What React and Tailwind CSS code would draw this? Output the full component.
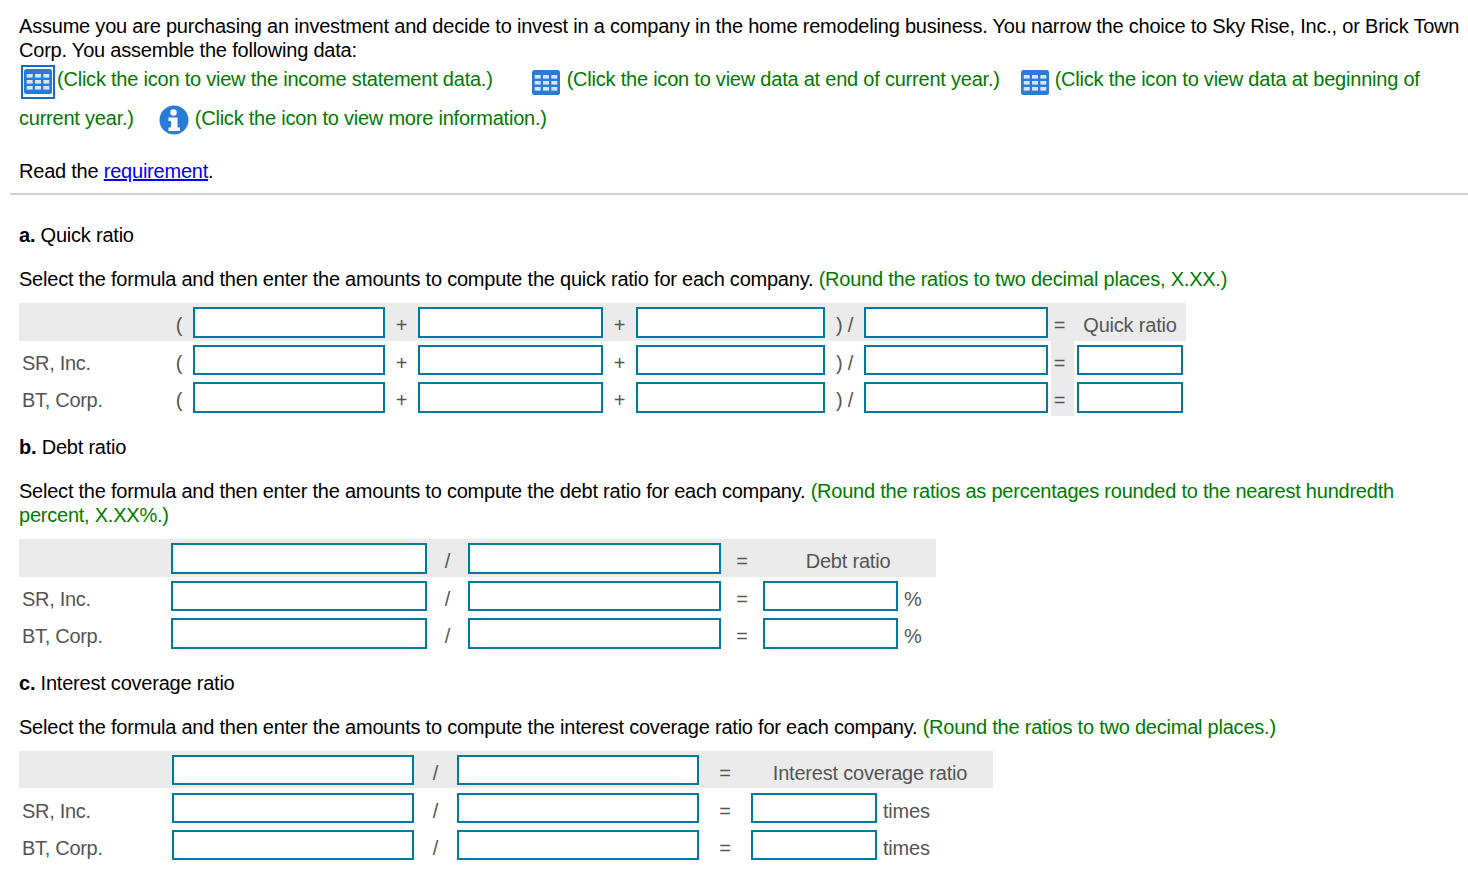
const green = "text-[#007a00]";

function Grid({ focus }) {
  return (
    <span className={`inline-flex items-center justify-center align-middle ${focus ? "border-[2px] border-[#0a6fc9] w-[34px] h-[34px]" : "w-[29px] h-[25px] mt-[1px]"}`}>
      <svg width="28" height="25" viewBox="0 0 28 25">
        <rect x="0" y="0" width="28" height="25" rx="2.5" fill="#2a7bd6" />
        {[5, 11, 17].map((y) =>
          [2.7, 11, 19.3].map((x) => (
            <rect key={`${x}-${y}`} x={x} y={y} width="6" height="3.6" fill="#d6e6f7" />
          ))
        )}
      </svg>
    </span>
  );
}

function Info() {
  return (
    <svg width="30" height="30" viewBox="0 0 30 30" className="inline-block align-middle">
      <circle cx="15" cy="15" r="14.5" fill="#2a7bd6" />
      <circle cx="14.5" cy="7.5" r="3.2" fill="#fff" />
      <path d="M9.5 12.5h9v10h2.5v3.5H9.5v-3.5h2.5v-6.5H9.5z" fill="#fff" />
    </svg>
  );
}

function Box({ w, h = "h-[31px]" }) {
  return <div className={`${w} ${h} shrink-0 border-2 border-[#00799e] bg-white`} />;
}

function Sym({ w, children, cls = "" }) {
  return <div className={`${w} shrink-0 pt-[5px] text-center text-[#555] text-[20px] leading-[24px] ${cls}`}>{children}</div>;
}

function Label({ w, children }) {
  return <div className={`${w} shrink-0 pt-[5px] pl-[3px] text-[#555] text-[20px] tracking-[-0.3px]`}>{children}</div>;
}

function RowA({ label, head, h, boxH }) {
  return (
    <div className={`flex items-center ${h} w-[1167px] ${head ? "bg-[#ebebeb]" : ""}`}>
      <Label w="w-[154px]">{label}</Label>
      <Sym w="w-[12px]" cls="mr-[8px]">(</Sym>
      <Box w="w-[192px]" h={boxH} />
      <Sym w="w-[33px]">+</Sym>
      <Box w="w-[185px]" h={boxH} />
      <Sym w="w-[33px]">+</Sym>
      <Box w="w-[189px]" h={boxH} />
      <Sym w="w-[39px]">{") /"}</Sym>
      <Box w="w-[184px]" h={boxH} />
      <div className={`w-[23px] ml-[3px] pr-[6px] pt-[5px] shrink-0 self-stretch flex items-center justify-center text-[#555] text-[20px] ${head ? "" : "bg-[#ebebeb]"}`}>=</div>
      {head ? (
        <div className="w-[112px] pt-[5px] shrink-0 text-center text-[#555] text-[20px] tracking-[-0.2px]">Quick ratio</div>
      ) : (
        <Box w="w-[106px] ml-[3px]" h={boxH} />
      )}
    </div>
  );
}

function RowB({ label, head, h, boxH }) {
  return (
    <div className={`flex items-center ${h} w-[917px] ${head ? "bg-[#ebebeb]" : ""}`}>
      <Label w="w-[152px]">{label}</Label>
      <Box w="w-[256px]" h={boxH} />
      <Sym w="w-[41px]">/</Sym>
      <Box w="w-[253px]" h={boxH} />
      <Sym w="w-[42px]">=</Sym>
      {head ? (
        <div className="w-[170px] pt-[5px] shrink-0 text-center text-[#555] text-[20px] tracking-[-0.2px]">Debt ratio</div>
      ) : (
        <>
          <Box w="w-[135px]" h={boxH} />
          <div className="ml-[6px] pt-[5px] text-[#555] text-[20px]">%</div>
        </>
      )}
    </div>
  );
}

function RowC({ label, head, h, boxH }) {
  return (
    <div className={`flex items-center ${h} w-[974px] ${head ? "bg-[#ebebeb]" : ""}`}>
      <Label w="w-[153px]">{label}</Label>
      <Box w="w-[242px]" h={boxH} />
      <Sym w="w-[43px]">/</Sym>
      <Box w="w-[242px]" h={boxH} />
      <Sym w="w-[52px]">=</Sym>
      {head ? (
        <div className="w-[238px] pt-[5px] shrink-0 text-center text-[#555] text-[20px] tracking-[-0.2px]">Interest coverage ratio</div>
      ) : (
        <>
          <Box w="w-[126px]" h={boxH} />
          <div className="ml-[6px] pt-[5px] text-[#555] text-[20px] tracking-[-0.2px]">times</div>
        </>
      )}
    </div>
  );
}

export default function App() {
  return (
    <div className="w-[1468px] h-[874px] overflow-hidden bg-white text-black text-[20px] leading-[24px] tracking-[-0.22px] pt-[14px]" style={{ fontFamily: '"Liberation Sans", Arial, sans-serif' }}>
      <div className="pl-[19px]">
        <p className="tracking-[-0.208px]">Assume you are purchasing an investment and decide to invest in a company in the home remodeling business. You narrow the choice to Sky Rise, Inc., or Brick Town Corp. You assemble the following data:</p>
        <div className={`${green} h-[39px] flex items-center whitespace-nowrap`}>
          <span className="ml-[2px] mr-[2px] flex"><Grid focus /></span>
          <span className="mb-[5px]">(Click the icon to view the income statement data.)</span>
          <span className="ml-[39px] mr-[6px] flex"><Grid /></span>
          <span className="mb-[5px]">(Click the icon to view data at end of current year.)</span>
          <span className="ml-[21px] mr-[5px] flex"><Grid /></span>
          <span className="mb-[5px]">(Click the icon to view data at beginning of</span>
        </div>
        <div className={`${green} h-[39px] flex items-center whitespace-nowrap`}>
          <span className="mb-[5px]">current year.)</span>
          <span className="ml-[25px] mr-[6px] mb-[1px] flex"><Info /></span>
          <span className="mb-[5px]">(Click the icon to view more information.)</span>
        </div>
        <p className="mt-[19px]">Read the <a className="text-[#0000ee] underline">requirement</a>.</p>
      </div>
      <div className="ml-[10px] mt-[10px] h-[2px] bg-[#cdd0da]" />

      <div className="pl-[19px]">
        <p className="mt-[28px]"><b>a.</b> Quick ratio</p>
        <p className="mt-[20px] tracking-[-0.225px]">Select the formula and then enter the amounts to compute the quick ratio for each company. <span className={green}>(Round the ratios to two decimal places, X.XX.)</span></p>
        <div className="mt-[12px]">
          <RowA head h="h-[38px]" boxH="h-[31px]" />
          <RowA label="SR, Inc." h="h-[38px]" boxH="h-[30px]" />
          <RowA label="BT, Corp." h="h-[37px]" boxH="h-[31px]" />
        </div>
        <p className="mt-[19px]"><b>b.</b> Debt ratio</p>
        <p className="mt-[20px] pr-[60px] tracking-[-0.23px]">Select the formula and then enter the amounts to compute the debt ratio for each company. <span className={green}>(Round the ratios as percentages rounded to the nearest hundredth percent, X.XX%.)</span></p>
        <div className="mt-[12px]">
          <RowB head h="h-[38px]" boxH="h-[31px]" />
          <RowB label="SR, Inc." h="h-[38px]" boxH="h-[30px]" />
          <RowB label="BT, Corp." h="h-[37px]" boxH="h-[31px]" />
        </div>
        <p className="mt-[19px]"><b>c.</b> Interest coverage ratio</p>
        <p className="mt-[20px] tracking-[-0.225px]">Select the formula and then enter the amounts to compute the interest coverage ratio for each company. <span className={green}>(Round the ratios to two decimal places.)</span></p>
        <div className="mt-[12px]">
          <RowC head h="h-[37px] pt-[1px]" boxH="h-[30px]" />
          <RowC label="SR, Inc." h="h-[39px] pt-[1px]" boxH="h-[30px]" />
          <RowC label="BT, Corp." h="h-[36px]" boxH="h-[30px]" />
        </div>
      </div>
    </div>
  );
}
